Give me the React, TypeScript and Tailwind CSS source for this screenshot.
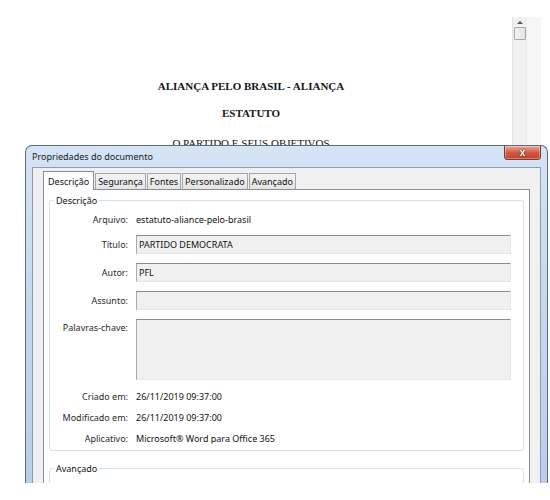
import React from "react";

const box =
  "h-[19px] bg-[#f0f0f0] border border-t-[#8a8a8a] border-l-[#a9a9a9] border-r-[#e6e6e6] border-b-[#e6e6e6] flex items-center px-[2px] text-[#111]";

function LabelRow({ label, children, h = "h-[21px]", top = false }: { label: string; children?: React.ReactNode; h?: string; top?: boolean }) {
  return (
    <div className={`flex ${h} ${top ? "items-start" : "items-center"}`}>
      <div className={`w-[78px] shrink-0 text-right text-[#2a2a2a] ${top ? "pt-[2px]" : ""}`}>{label}</div>
      <div className="ml-[8px] mr-[12px] flex-1 min-w-0 h-full flex items-center">{children}</div>
    </div>
  );
}

export default function App() {
  const tabs = ["Descrição", "Segurança", "Fontes", "Personalizado", "Avançado"];
  return (
    <div className="relative w-[550px] h-[500px] overflow-hidden bg-white font-['Noto_Sans',sans-serif] text-[9px] leading-[13px]">
      {/* document viewer */}
      <div className="flex h-[483px]">
        <div className="flex-1 pr-[10px] flex flex-col items-center pt-[79px] font-['Liberation_Serif',serif] text-[11px] leading-[14px] text-[#151515]">
          <p className="font-bold">ALIANÇA PELO BRASIL - ALIANÇA</p>
          <p className="mt-[13px] font-bold">ESTATUTO</p>
          <p className="mt-[16px] underline">O PARTIDO E SEUS OBJETIVOS</p>
        </div>
        <div className="w-[29px] mt-[17px] flex">
          <div className="w-[14px] bg-[#f1f1f1] border-l border-[#e2e2e2] flex flex-col items-center">
            <div className="h-[10px] flex items-center justify-center">
              <div className="w-0 h-0 border-l-[3px] border-r-[3px] border-b-[3px] border-l-transparent border-r-transparent border-b-[#555]" />
            </div>
            <div className="w-[12px] h-[13px] border border-[#a8a8a8] rounded-[1px] bg-gradient-to-r from-[#f4f4f4] to-[#e2e2e2]" />
          </div>
          <div className="flex-1 bg-[#f6f6f6] border-l border-[#ebebeb]" />
        </div>
        <div className="w-[9px]" />
      </div>

      {/* dialog window */}
      <div className="absolute left-[25px] top-[145px] w-[523px] h-[338px] overflow-hidden rounded-t-[7px] border border-b-0 border-[#5b6b80] bg-gradient-to-b from-[#d5e4f5] via-[#c3d8ee] to-[#b8cfe9] flex flex-col">
        <div className="h-[21px] shrink-0 flex items-center pl-[6px] relative">
          <span className="text-[#1a1a1a] text-[9px]">Propriedades do documento</span>
          <div className="absolute right-[6px] top-[-1px] w-[37px] h-[15px] rounded-b-[3px] border border-[#7a3a30] bg-gradient-to-b from-[#eaa997] via-[#d25a44] to-[#c2402b] flex items-center justify-center shadow-[inset_0_0_0_1px_rgba(255,255,255,0.35)]">
            <span className="text-white font-bold text-[10px] leading-none font-['Liberation_Sans',sans-serif] drop-shadow-[0_0_1px_rgba(0,0,0,0.6)]">x</span>
          </div>
        </div>
        <div className="flex-1 mx-[6px] border border-b-0 border-[#8b9bb0] bg-[#f0f0f0] pl-[10px] pr-[10px] pt-[4px] flex flex-col">
          {/* tabs */}
          <div className="flex items-end h-[17px] relative z-10">
            {tabs.map((t, i) =>
              i === 0 ? (
                <div key={t} className="h-[19px] -mb-[1px] px-[4px] bg-white border border-b-0 border-[#898c95] flex items-center text-[#111]">
                  {t}
                </div>
              ) : (
                <div key={t} className="h-[16px] ml-[1px] px-[2px] bg-gradient-to-b from-[#f4f4f4] to-[#e4e4e4] border border-b-0 border-[#a3a6ae] flex items-center text-[#111]">
                  {t}
                </div>
              )
            )}
          </div>
          <div className="flex-1 bg-white border border-b-0 border-[#898c95] px-[5px] pt-[4px]">
            <fieldset className="border border-[#d5dfe5] rounded-[3px] h-[257px]">
              <legend className="ml-[4px] px-[2px] text-[#111]">Descrição</legend>
              <div className="pt-[3px]">
                <LabelRow label="Arquivo:" h="h-[19px]">
                  <span className="text-[#111]">estatuto-aliance-pelo-brasil</span>
                </LabelRow>
                <div className="mt-[6px] flex flex-col gap-[9px]">
                  <LabelRow label="Título:" h="h-[19px]">
                    <div className={`${box} w-full`}>PARTIDO DEMOCRATA</div>
                  </LabelRow>
                  <LabelRow label="Autor:" h="h-[19px]">
                    <div className={`${box} w-full`}>PFL</div>
                  </LabelRow>
                  <LabelRow label="Assunto:" h="h-[19px]">
                    <div className={`${box} w-full`} />
                  </LabelRow>
                  <LabelRow label="Palavras-chave:" h="h-[61px]" top>
                    <div className={`${box} w-full !h-[61px]`} />
                  </LabelRow>
                </div>
                <div className="mt-[6px]">
                  <LabelRow label="Criado em:">
                    <span className="text-[#111]">26/11/2019 09:37:00</span>
                  </LabelRow>
                  <LabelRow label="Modificado em:">
                    <span className="text-[#111]">26/11/2019 09:37:00</span>
                  </LabelRow>
                  <LabelRow label="Aplicativo:">
                    <span className="text-[#111]">Microsoft® Word para Office 365</span>
                  </LabelRow>
                </div>
              </div>
            </fieldset>
            <fieldset className="mt-[11px] border border-[#d5dfe5] rounded-[3px] h-[60px]">
              <legend className="ml-[4px] px-[2px] text-[#111]">Avançado</legend>
            </fieldset>
          </div>
        </div>
      </div>
    </div>
  );
}
